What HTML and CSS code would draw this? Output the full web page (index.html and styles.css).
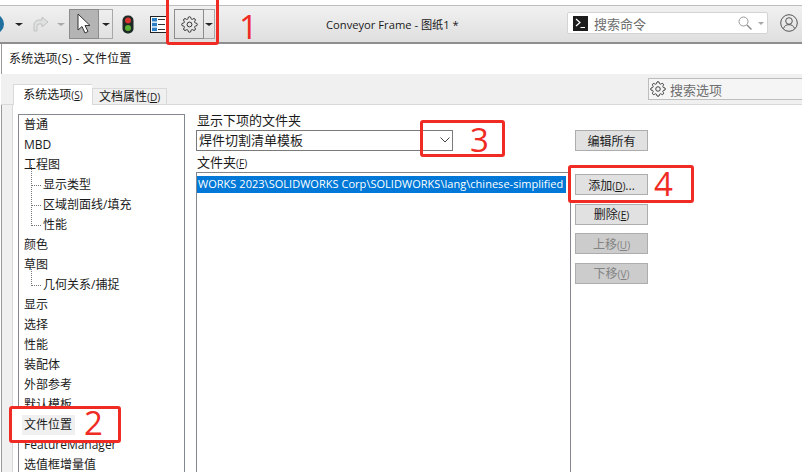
FILE: index.html
```html
<!DOCTYPE html>
<html lang="zh-CN">
<head>
    <meta charset="UTF-8">
    <title>系统选项(S) - 文件位置</title>
    <link rel="stylesheet" href="styles.css">
</head>
<body>
    <svg class="defs" width="0" height="0">
        <symbol id="gear" viewBox="0 0 24 24">
            <circle cx="12" cy="12" r="3.4"/>
            <path d="M19.4 15a1.65 1.65 0 0 0 .33 1.82l.06.06a2 2 0 0 1 0 2.83 2 2 0 0 1-2.83 0l-.06-.06a1.65 1.65 0 0 0-1.82-.33 1.65 1.65 0 0 0-1 1.51V21a2 2 0 0 1-2 2 2 2 0 0 1-2-2v-.09A1.65 1.65 0 0 0 9 19.4a1.65 1.65 0 0 0-1.82.33l-.06.06a2 2 0 0 1-2.83 0 2 2 0 0 1 0-2.83l.06-.06a1.65 1.65 0 0 0 .33-1.82 1.65 1.65 0 0 0-1.51-1H3a2 2 0 0 1-2-2 2 2 0 0 1 2-2h.09A1.65 1.65 0 0 0 4.6 9a1.65 1.65 0 0 0-.33-1.82l-.06-.06a2 2 0 0 1 0-2.83 2 2 0 0 1 2.83 0l.06.06a1.65 1.65 0 0 0 1.82.33H9a1.65 1.65 0 0 0 1-1.51V3a2 2 0 0 1 2-2 2 2 0 0 1 2 2v.09a1.65 1.65 0 0 0 1 1.51 1.65 1.65 0 0 0 1.82-.33l.06-.06a2 2 0 0 1 2.83 0 2 2 0 0 1 0 2.83l-.06.06a1.65 1.65 0 0 0-.33 1.82V9a1.65 1.65 0 0 0 1.51 1H21a2 2 0 0 1 2 2 2 2 0 0 1-2 2h-.09a1.65 1.65 0 0 0-1.51 1z"/>
        </symbol>
    </svg>

    <div class="toolbar">
        <svg class="icon-undo" width="6" height="20" viewBox="0 0 6 20">
            <path d="M-6 2a8 8 0 0 1 8 8 8 8 0 0 1-8 8" fill="none" stroke="#1f6f9f" stroke-width="4"/>
        </svg>
        <span class="caret caret-first"></span>
        <svg class="icon-redo" width="18" height="18" viewBox="0 0 18 18">
            <path d="M3 16V10a5 5 0 0 1 5-5h3V2l6 5-6 5V9H8a2 2 0 0 0-2 2v5z" fill="#dfe1e1" stroke="#c0c2c2"/>
        </svg>
        <span class="caret caret-muted"></span>
        <div class="tool-group">
            <div class="tool-btn pressed">
                <svg width="16" height="22" viewBox="0 0 16 22">
                    <path d="M2 1v16l4-3.500 3 6.500 3-1.500-3-6h5z" fill="#fff" stroke="#333" stroke-width="1"/>
                </svg>
            </div>
            <div class="tool-drop"><span class="caret"></span></div>
        </div>
        <svg class="icon-light" width="12" height="19" viewBox="0 0 12 19">
            <rect x="0.500" y="0.500" width="11" height="18" rx="5" fill="#1d2a26"/>
            <circle cx="6" cy="5.500" r="3" fill="#d9332e"/>
            <circle cx="6" cy="13" r="3" fill="#5bb134"/>
        </svg>
        <svg class="icon-list" width="17" height="17" viewBox="0 0 17 17">
            <rect x="0.500" y="0.500" width="16" height="16" fill="#fff" stroke="#222"/>
            <rect x="2" y="2" width="5" height="3.500" fill="#2b7fc4"/>
            <rect x="2" y="6.800" width="5" height="3.500" fill="#2b7fc4"/>
            <rect x="2" y="11.600" width="5" height="3.500" fill="#2b7fc4"/>
            <path d="M8 3.500h7M8 8.500h7M8 13.500h7" stroke="#333"/>
        </svg>
        <div class="tool-group group-gear">
            <div class="tool-btn">
                <svg class="gear gear-big" width="17" height="17"><use href="#gear"/></svg>
            </div>
            <div class="tool-drop drop-small"><span class="caret"></span></div>
        </div>
        <div class="doc-title">Conveyor Frame - 图纸1 *</div>
        <div class="cmd-search">
            <span class="cmd-icon"><svg width="15" height="15" viewBox="0 0 15 15"><path d="M3 3l4 3.500-4 3.500M7.500 11.500H12" fill="none" stroke="#fff" stroke-width="1.200"/></svg></span>
            <span class="cmd-text">搜索命令</span>
            <svg class="cmd-glass" width="14" height="14" viewBox="0 0 14 14">
                <circle cx="5.500" cy="5.500" r="4.500" fill="none" stroke="#9a9a9a"/>
                <path d="M9 9l4.500 4.500" stroke="#8a8a8a" stroke-width="1.400"/>
            </svg>
            <span class="caret caret-muted caret-tiny"></span>
        </div>
        <svg class="icon-user" width="18" height="18" viewBox="0 0 18 18">
            <circle cx="9" cy="9" r="8.300" fill="none" stroke="#555"/>
            <circle cx="9" cy="7" r="3.300" fill="none" stroke="#555"/>
            <path d="M3.500 14.500c1-3 3-3.800 5.500-3.800s4.500.8 5.500 3.800" fill="none" stroke="#555"/>
        </svg>
    </div>

    <div class="dialog">
        <div class="dialog-title">系统选项(S) - 文件位置</div>
        <div class="tab-band">
            <div class="tabs">
                <div class="tab active">系统选项<small>(<u>S</u>)</small></div>
                <div class="tab">文档属性<small>(<u>D</u>)</small></div>
            </div>
            <div class="option-search">
                <svg class="gear" width="16" height="16"><use href="#gear"/></svg>
                <span>搜索选项</span>
            </div>
        </div>
        <div class="pane">
            <ul class="tree">
                <li>普通</li>
                <li>MBD</li>
                <li>工程图</li>
                <li class="child">显示类型</li>
                <li class="child">区域剖面线/填充</li>
                <li class="child last">性能</li>
                <li>颜色</li>
                <li>草图</li>
                <li class="child last">几何关系/捕捉</li>
                <li>显示</li>
                <li>选择</li>
                <li>性能</li>
                <li>装配体</li>
                <li>外部参考</li>
                <li>默认模板</li>
                <li class="selected"><span>文件位置</span></li>
                <li>FeatureManager</li>
                <li>选值框增量值</li>
            </ul>
            <div class="folders">
                <label class="label">显示下项的文件夹</label>
                <div class="combo">
                    <span>焊件切割清单模板</span>
                    <svg width="10" height="6" viewBox="0 0 10 6"><path d="M0.500 0.500L5 5l4.500-4.500" fill="none" stroke="#444"/></svg>
                </div>
                <label class="label label-folder">文件夹<small>(<u>F</u>)</small></label>
                <div class="folder-list">
                    <div class="folder-row">WORKS 2023\SOLIDWORKS Corp\SOLIDWORKS\lang\chinese-simplified</div>
                </div>
            </div>
            <div class="actions">
                <button class="edit-all">编辑所有</button>
                <button class="add">添加<small>(<u>D</u>)</small>...</button>
                <button>删除<small>(<u>E</u>)</small></button>
                <button class="off">上移<small>(<u>U</u>)</small></button>
                <button class="off">下移<small>(<u>V</u>)</small></button>
            </div>
        </div>
    </div>

    <div class="mark mark-1"></div>
    <div class="mark-num num-1">1</div>
    <div class="mark mark-2 filled"></div>
    <div class="mark-num num-2">2</div>
    <div class="mark mark-3"></div>
    <div class="mark-num num-3">3</div>
    <div class="mark mark-4"></div>
    <div class="mark-num num-4">4</div>
</body>
</html>
```

FILE: styles.css
```css
html, body {
    margin: 0;
    height: 472px;
    overflow: hidden;
    background: #fff;
}
body {
    font-family: "Open Sans", "Noto Sans CJK SC", sans-serif;
    font-size: 12px;
    color: #1a1a1a;
    position: relative;
}
.defs {
    position: absolute;
}
small {
    font-size: 10px;
}

/* top toolbar */
.toolbar {
    height: 39px;
    margin-top: 5px;
    box-sizing: border-box;
    display: flex;
    align-items: center;
    background: linear-gradient(#f1f1f1, #dfdfdf);
    border-top: 1px solid #bdbdbd;
    border-bottom: 2px solid #8e8e8e;
}
.caret {
    display: inline-block;
    width: 0;
    height: 0;
    border-left: 4px solid transparent;
    border-right: 4px solid transparent;
    border-top: 3px solid #222;
}
.caret-muted {
    border-top-color: #a8a8a8;
    margin-left: 8px;
}
.caret-tiny {
    border-left-width: 3px;
    border-right-width: 3px;
}
.caret-first {
    margin-left: 9px;
}
.icon-redo {
    margin-left: 8px;
}
.tool-group {
    display: flex;
    height: 30px;
    margin-left: 4px;
}
.tool-btn {
    width: 30px;
    box-sizing: border-box;
    border: 1px solid #8c8c8c;
    display: flex;
    align-items: center;
    justify-content: center;
}
.tool-btn.pressed {
    background: #b4b4b4;
}
.tool-drop {
    width: 14px;
    box-sizing: border-box;
    border: 1px solid #a8a8a8;
    border-left: 0;
    display: flex;
    align-items: center;
    justify-content: center;
}
.icon-light {
    margin-left: 9px;
}
.icon-list {
    margin-left: 16px;
}
.group-gear {
    margin-left: 7px;
}
.drop-small {
    width: 11px;
}
.gear {
    fill: none;
    stroke: #333;
    stroke-width: 1.400;
}
.doc-title {
    margin-left: 111px;
    width: 241px;
    white-space: nowrap;
    font-size: 11.200px;
}
.cmd-search {
    width: 201px;
    height: 22px;
    margin-bottom: 2px;
    box-sizing: border-box;
    background: #fff;
    border: 1px solid #d4d4d4;
    border-radius: 2px;
    display: flex;
    align-items: center;
    padding-left: 5px;
}
.cmd-icon {
    width: 15px;
    height: 15px;
    background: #1c1c1c;
    display: flex;
}
.cmd-text {
    margin-left: 6px;
    font-size: 13px;
    color: #6e6e6e;
    width: 144px;
}
.cmd-glass {
    flex: none;
}
.cmd-search .caret-tiny {
    margin-left: 6px;
}
.icon-user {
    margin-left: 12px;
    margin-bottom: 2px;
}

/* dialog */
.dialog {
    margin-left: 1px;
    border-left: 1px solid #9a9a9a;
    background: #f0f0f0;
}
.dialog-title {
    height: 30px;
    padding-left: 7px;
    line-height: 29px;
    font-size: 12px;
    letter-spacing: 0.200px;
    background: #fff;
}
.tab-band {
    height: 31px;
    background: #f0f0f0;
    border-bottom: 1px solid #d9d9d9;
    display: flex;
    justify-content: space-between;
    margin-left: -1px;
    box-sizing: border-box;
}
.tabs {
    display: flex;
    align-items: flex-end;
    margin-left: 12px;
    margin-bottom: -1px;
}
.tab {
    height: 17px;
    width: 75px;
    box-sizing: border-box;
    border: 1px solid #d9d9d9;
    border-bottom: 0;
    text-align: center;
    line-height: 16px;
}
.tab.active {
    height: 21px;
    width: 79px;
    background: #fff;
    border-right: 0;
    line-height: 19px;
}
.option-search {
    width: 154px;
    height: 22px;
    margin-top: 4px;
    box-sizing: border-box;
    background: #f5f5f5;
    border: 1px solid #bdbdbd;
    border-right: 0;
    display: flex;
    align-items: center;
    gap: 4px;
    padding-left: 1px;
    color: #6e6e6e;
    font-size: 13px;
}
.pane {
    margin-left: 10px;
    height: 367px;
    box-sizing: border-box;
    padding: 9px 0 0 5px;
    border-left: 1px solid #d9d9d9;
    display: flex;
    background: #fff;
}

/* left tree */
.tree {
    list-style: none;
    margin: 0;
    padding: 0 0 0 5px;
    width: 167px;
    height: 360px;
    box-sizing: border-box;
    border: 1px solid #828790;
    border-bottom: 0;
    overflow: hidden;
    flex: none;
}
.tree li {
    height: 20px;
    line-height: 20px;
    white-space: nowrap;
}
.tree .child {
    margin-left: 19px;
    position: relative;
}
.tree .child::before {
    content: "";
    position: absolute;
    left: -12px;
    top: -10px;
    width: 9px;
    height: 20px;
    border-left: 1px dotted #777;
    border-bottom: 1px dotted #777;
}
.tree .selected {
    position: relative;
    z-index: 2;
}
.tree .selected span {
    display: inline-block;
    background: #f0f0f0;
    margin-left: -2px;
    padding: 0 3px 0 2px;
}

/* folders column */
.folders {
    margin: -1px 0 0 11px;
    width: 375px;
    flex: none;
    display: flex;
    flex-direction: column;
}
.label {
    height: 17px;
    line-height: 14px;
    font-size: 13px;
    margin-left: 1px;
}
.label-folder {
    margin-top: 4px;
    height: 17px;
    line-height: 14px;
}
.combo {
    width: 257px;
    height: 21px;
    box-sizing: border-box;
    border: 1px solid #7a7a7a;
    display: flex;
    align-items: center;
    justify-content: space-between;
    padding: 0 2px 2px 2px;
    font-size: 13px;
    background: #fff;
}
.folder-list {
    flex: 1;
    box-sizing: border-box;
    border: 1px solid #828790;
    border-bottom: 0;
    padding: 3px 4px 0 0;
    overflow: hidden;
}
.folder-row {
    height: 17px;
    line-height: 16px;
    background: #0078d7;
    color: #fff;
    font-size: 11px;
    letter-spacing: 0.030px;
    white-space: nowrap;
    padding-left: 1px;
    overflow: hidden;
}

/* right buttons */
.actions {
    margin: -1px 0 0 4px;
    padding-top: 17px;
    display: flex;
    flex-direction: column;
    gap: 8.500px;
}
.actions button {
    width: 73px;
    height: 21px;
    padding: 0;
    box-sizing: border-box;
    border: 1px solid #adadad;
    background: #e1e1e1;
    font: inherit;
    font-size: 12px;
    color: #1a1a1a;
}
.actions .edit-all {
    margin-bottom: 14.500px;
}
.actions .off {
    background: #cccccc;
    color: #838383;
}

/* red annotations */
.mark {
    position: absolute;
    box-sizing: border-box;
    border: 3px solid #ef2b24;
    border-radius: 3px;
    z-index: 1;
}
.mark.filled {
    background: #fff;
}
.mark-1 { left: 166px; top: -3px; width: 53px; height: 48px; }
.mark-2 { left: 9px; top: 406px; width: 112px; height: 37px; }
.mark-3 { left: 420px; top: 120px; width: 85px; height: 37px; }
.mark-4 { left: 568px; top: 165px; width: 126px; height: 38px; }
.mark-num {
    position: absolute;
    z-index: 3;
    color: #ef2b24;
    font-family: "Open Sans", sans-serif;
    font-size: 33px;
    line-height: 32px;
}
.num-1 { left: 239px; top: 11px; }
.num-2 { left: 84px; top: 407px; }
.num-3 { left: 470px; top: 124px; }
.num-4 { left: 654px; top: 168px; }
```
